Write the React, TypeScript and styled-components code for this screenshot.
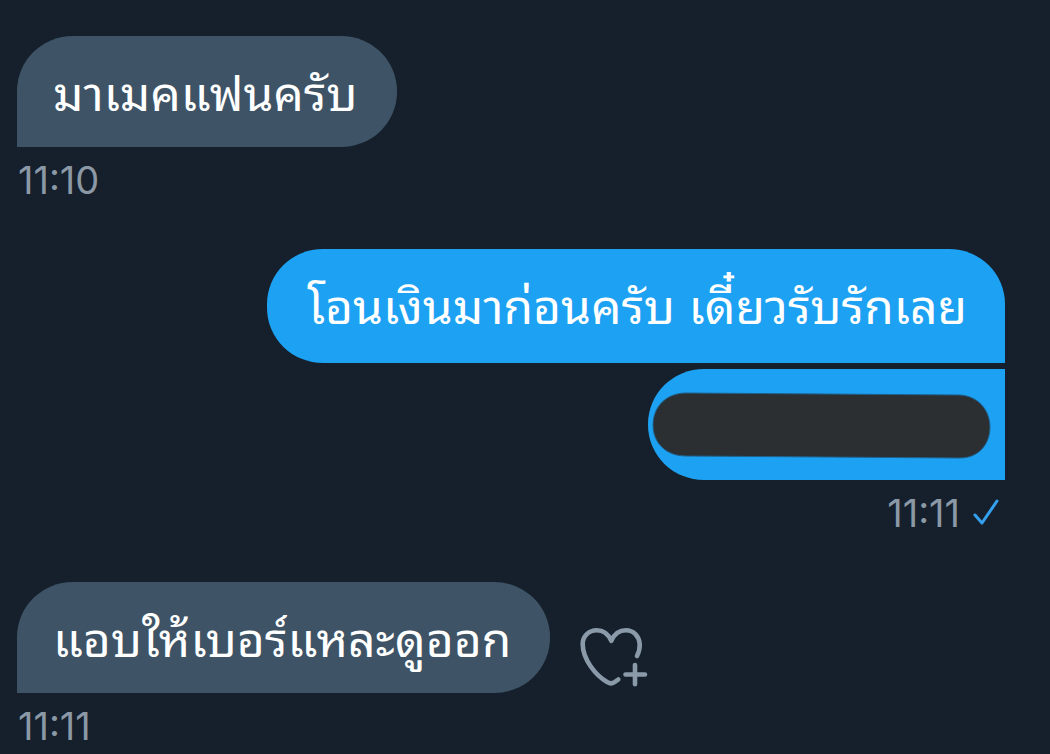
import React from "react";
import styled, { createGlobalStyle } from "styled-components";

const GlobalStyle = createGlobalStyle`
  * { box-sizing: border-box; }
  body {
    margin: 0;
    background: #15202c;
    font-family: Inter, "Noto Sans Thai Looped", Loma, Garuda, Waree, Umpush, Sarabun, "Noto Sans Thai", "Noto Sans", sans-serif;
  }
`;

type Side = "in" | "out";

const Thread = styled.main`
  display: flex;
  flex-direction: column;
  gap: 42px;
  padding: 36px 45px 0 17px;
`;

const Group = styled.section<{ $side: Side }>`
  display: flex;
  flex-direction: column;
  align-items: ${(p) => (p.$side === "in" ? "flex-start" : "flex-end")};
  gap: 6px;
`;

const Row = styled.div`
  display: flex;
  align-items: center;
  gap: 28px;
`;

const Bubble = styled.p<{ $side: Side; $follow?: boolean }>`
  margin: 0;
  padding: ${(p) => (p.$side === "in" ? "22px 39px 17px 36px" : "22px 38px 20px 40px")};
  color: #fff;
  font-size: 48px;
  font-weight: 430;
  line-height: 72px;
  background: ${(p) => (p.$side === "in" ? "#3e5466" : "#1da1f2")};
  border-radius: ${(p) =>
    p.$side === "in"
      ? "56px 56px 56px 0 / 55px"
      : p.$follow
        ? "56px 0 0 56px / 55px"
        : "56px 56px 0 56px / 55px"};
`;

const HiddenBubble = styled(Bubble)`
  padding: 23px 14px 20px 4px;

  svg {
    display: block;
  }
`;

const Meta = styled.div`
  display: flex;
  align-items: center;
  gap: 13px;
  padding: 0 6px 0 1px;
  color: #8b98a6;
  font-size: 38px;
  line-height: 54px;

  svg {
    display: block;
  }
`;

const ReactButton = styled.button`
  display: block;
  margin-top: 36px;
  padding: 0;
  border: 0;
  background: none;
  color: #8b9aa8;
  cursor: pointer;

  svg {
    display: block;
  }
`;

function HeartPlus() {
  return (
    <svg width="72" height="64" viewBox="0 0 72 64" fill="none" stroke="currentColor" strokeWidth="4.6" strokeLinecap="round" strokeLinejoin="round">
      <path d="M59 32C61 28 62 25 61.7 20C61 12 55.500 6.200 48 6.200C41 6.200 36 10.500 33.300 16.800C30.500 10.500 25.500 6.200 18.700 6.200C11 6.200 4.700 12 4.700 20C4.700 35 17.500 51.500 29.500 58.200Q33 60.500 36.500 58.200L40.300 55.500" />
      <path d="M57 41V60.300M47.500 50.500H67" />
    </svg>
  );
}

function Check() {
  return (
    <svg width="26" height="28" viewBox="0 0 26 28" fill="none" stroke="#35a0ee" strokeWidth="3" strokeLinecap="round" strokeLinejoin="round" role="img" aria-label="Sent">
      <path d="M2 16L9 24L24 2" />
    </svg>
  );
}

function Redaction() {
  return (
    <svg width="339" height="68" viewBox="0 0 339 68" role="img" aria-label="Hidden message">
      <path d="M34 1L308 3C326 4 338 18 338 35C338 53 326 66 308 66L34 64C14 64 1 51 1 33C1 15 14 1 34 1Z" fill="#2b2f32" stroke="#20618c" strokeWidth="1" />
    </svg>
  );
}

export default function App() {
  return (
    <>
      <GlobalStyle />
      <Thread lang="th">
        <Group $side="in">
          <Bubble $side="in">มาเมคแฟนครับ</Bubble>
          <Meta><time>11:10</time></Meta>
        </Group>
        <Group $side="out">
          <Bubble $side="out">โอนเงินมาก่อนครับ เดี๋ยวรับรักเลย</Bubble>
          <HiddenBubble as="div" $side="out" $follow><Redaction /></HiddenBubble>
          <Meta><time>11:11</time><Check /></Meta>
        </Group>
        <Group $side="in">
          <Row>
            <Bubble $side="in">แอบให้เบอร์แหละดูออก</Bubble>
            <ReactButton type="button" aria-label="Add reaction"><HeartPlus /></ReactButton>
          </Row>
          <Meta><time>11:11</time></Meta>
        </Group>
      </Thread>
    </>
  );
}
